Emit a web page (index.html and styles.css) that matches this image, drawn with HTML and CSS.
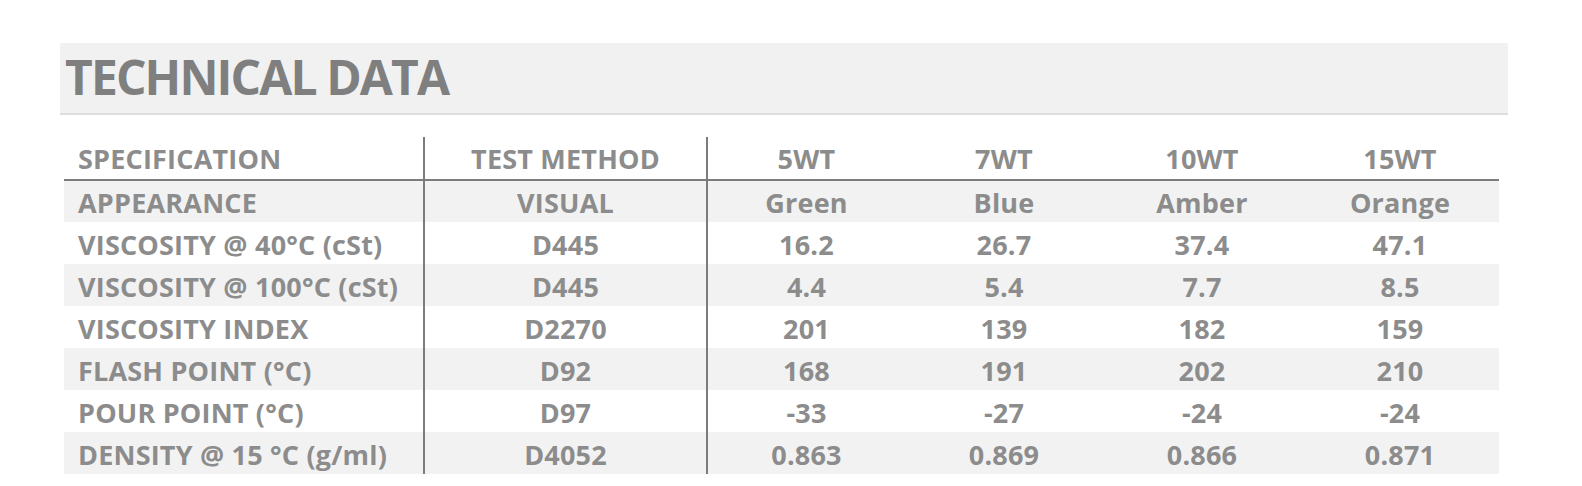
FILE: index.html
```html
<!DOCTYPE html>
<html>
<head>
<meta charset="utf-8">
<link rel="stylesheet" href="styles.css">
</head>
<body>
<div class="page">
  <div class="banner"><h1 class="title">TECHNICAL DATA</h1></div>
  <table class="spec-table">
    <colgroup>
      <col class="c-spec"><col class="c-method"><col class="c-val"><col class="c-val"><col class="c-val"><col class="c-val">
    </colgroup>
    <thead>
      <tr><th class="left">SPECIFICATION</th><th class="sep">TEST METHOD</th><th class="sep">5WT</th><th>7WT</th><th>10WT</th><th>15WT</th></tr>
    </thead>
    <tbody>
      <tr class="alt"><td class="left">APPEARANCE</td><td class="sep">VISUAL</td><td class="sep">Green</td><td>Blue</td><td>Amber</td><td>Orange</td></tr>
      <tr><td class="left">VISCOSITY @ 40°C (cSt)</td><td class="sep">D445</td><td class="sep">16.2</td><td>26.7</td><td>37.4</td><td>47.1</td></tr>
      <tr class="alt"><td class="left">VISCOSITY @ 100°C (cSt)</td><td class="sep">D445</td><td class="sep">4.4</td><td>5.4</td><td>7.7</td><td>8.5</td></tr>
      <tr><td class="left">VISCOSITY INDEX</td><td class="sep">D2270</td><td class="sep">201</td><td>139</td><td>182</td><td>159</td></tr>
      <tr class="alt"><td class="left">FLASH POINT (°C)</td><td class="sep">D92</td><td class="sep">168</td><td>191</td><td>202</td><td>210</td></tr>
      <tr><td class="left">POUR POINT (°C)</td><td class="sep">D97</td><td class="sep">-33</td><td>-27</td><td>-24</td><td>-24</td></tr>
      <tr class="alt"><td class="left">DENSITY @ 15 °C (g/ml)</td><td class="sep">D4052</td><td class="sep">0.863</td><td>0.869</td><td>0.866</td><td>0.871</td></tr>
    </tbody>
  </table>
</div>
</body>
</html>
```
FILE: styles.css
```css
html, body {
  margin: 0;
  padding: 0;
  background: #ffffff;
}
.page {
  padding: 43px 0 0 60px;
  font-family: "Open Sans", "Liberation Sans", sans-serif;
}
.banner {
  width: 1448px;
  height: 70px;
  background: #f1f1f1;
  border-bottom: 2px solid #dddddd;
  display: flex;
  align-items: center;
}
.title {
  margin: 0 0 3px 5px;
  font-size: 48px;
  font-weight: 700;
  color: #7f7f7f;
  letter-spacing: -1.9px;
  line-height: 1;
}
.spec-table {
  margin: 22px 0 0 4px;
  border-collapse: collapse;
  table-layout: fixed;
  width: 1435px;
  color: #8c8c8c;
  font-size: 27px;
  font-weight: 700;
  letter-spacing: 0.2px;
}
.c-spec { width: 360px; }
.c-method { width: 283px; }
.c-val { width: 198px; }
.spec-table th, .spec-table td {
  padding: 0;
  text-align: center;
  white-space: nowrap;
  line-height: 1;
}
.spec-table th {
  height: 42px;
  font-weight: 700;
  border-bottom: 2px solid #7c7c7c;
}
.spec-table td {
  height: 42px;
  padding-top: 2px;
  box-sizing: border-box;
}
.spec-table .left {
  text-align: left;
  padding-left: 14px;
}
.spec-table .sep {
  border-left: 2px solid #7c7c7c;
}
.spec-table tr.alt td {
  background: #f2f2f2;
}
```
